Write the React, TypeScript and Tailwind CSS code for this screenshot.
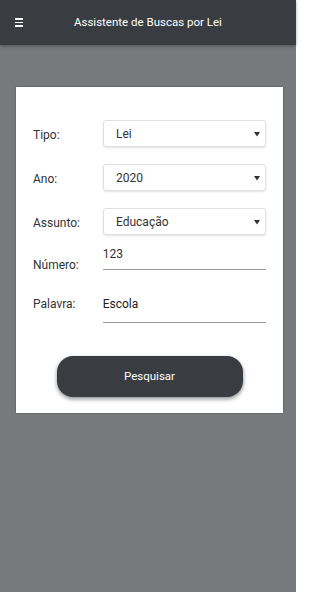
import React from "react";

function Arrow() {
  return (
    <svg width="6" height="6" viewBox="0 0 6 6" className="absolute right-[5px] top-1/2 -translate-y-1/2">
      <path d="M0 1 H6 L3 5.5 Z" fill="#333" />
    </svg>
  );
}

function SelectRow({ label, value, mt }: { label: string; value: string; mt: string }) {
  return (
    <div className={`flex items-center ${mt}`}>
      <div className="w-[70px] pt-[3px] text-[12px] text-[#333]">{label}</div>
      <div className="relative flex h-[27px] w-[163px] items-center rounded-[3px] border border-[#e0e0e0] pl-[12px] text-[12px] text-[#333] shadow-[0_1px_2px_rgba(0,0,0,0.12)]">
        {value}
        <Arrow />
      </div>
    </div>
  );
}

export default function App() {
  return (
    <div className="flex h-[592px] w-[296px] flex-col bg-[#777a7c]" style={{ fontFamily: "Roboto, 'Liberation Sans', sans-serif" }}>
      <div className="relative flex h-[45px] items-center bg-[#393d41] shadow-[0_1px_3px_rgba(0,0,0,0.35)]">
        <div className="absolute left-[15px] top-[18px] flex flex-col gap-[2px]">
          <div className="h-[1.5px] w-[8px] bg-white" />
          <div className="h-[1.5px] w-[8px] bg-white" />
          <div className="h-[1.5px] w-[8px] bg-white" />
        </div>
        <div className="w-full pl-[74px] text-[11.5px] text-white">Assistente de Buscas por Lei</div>
      </div>
      <div className="ml-[16px] mt-[42px] h-[326px] w-[267px] bg-white px-[17px] pt-[33px] shadow-[0_0_2px_rgba(0,0,0,0.3)]">
        <SelectRow label="Tipo:" value="Lei" mt="mt-0" />
        <SelectRow label="Ano:" value="2020" mt="mt-[17px]" />
        <SelectRow label="Assunto:" value="Educação" mt="mt-[17px]" />
        <div className="flex">
          <div className="w-[70px] pt-[21px] text-[12px] text-[#333]">Número:</div>
          <div className="h-[35px] w-[164px] border-b border-[#9a9a9a] pt-[10px] text-[12px] text-[#333]">123</div>
        </div>
        <div className="mt-[14px] flex">
          <div className="w-[70px] pt-[7px] text-[12px] text-[#333]">Palavra:</div>
          <div className="h-[35px] w-[164px] border-b border-[#9a9a9a] pt-[7px] text-[12px] text-[#222]">Escola</div>
        </div>
        <div className="mt-[33px] flex justify-center">
          <div className="flex h-[41px] w-[186px] items-center justify-center rounded-[16px] bg-[#393d41] text-[11.5px] text-white shadow-[0_2px_4px_rgba(0,0,0,0.45)]">
            Pesquisar
          </div>
        </div>
      </div>
    </div>
  );
}
